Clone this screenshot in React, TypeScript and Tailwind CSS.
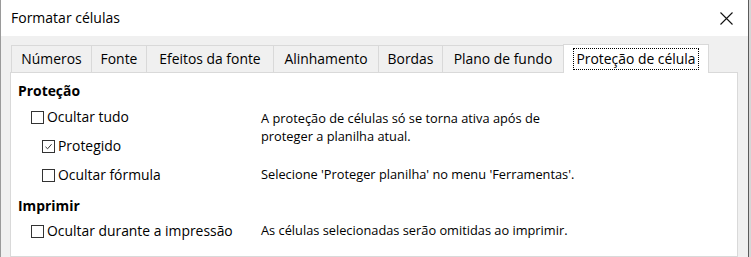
import React from "react";

const TABS: { label: string; w: string }[] = [
  { label: "Números", w: "w-[81px]" },
  { label: "Fonte", w: "w-[56px]" },
  { label: "Efeitos da fonte", w: "w-[128px]" },
  { label: "Alinhamento", w: "w-[106px]" },
  { label: "Bordas", w: "w-[65px]" },
  { label: "Plano de fundo", w: "w-[122px]" },
];

function Box({ checked = false }: { checked?: boolean }) {
  return (
    <span className="flex h-[13px] w-[13px] shrink-0 items-center justify-center border border-[#333]">
      {checked && (
        <svg width="9" height="9" viewBox="0 0 9 9" fill="none">
          <path d="M1.5 4.8 L3.6 6.8 L7.6 2.2" stroke="#333" strokeWidth="1" />
        </svg>
      )}
    </span>
  );
}

function Check({ label, checked, indent }: { label: string; checked?: boolean; indent?: boolean }) {
  return (
    <div className={`flex h-full items-center gap-[3px] ${indent ? "pl-[31px]" : "pl-[20px]"}`}>
      <Box checked={checked} />
      <span>{label}</span>
    </div>
  );
}

export default function App() {
  return (
    <div className="flex h-[257px] w-[751px] overflow-hidden bg-[#d6d6d6] font-['Open_Sans',sans-serif] text-[13.9px] text-black">
      <div className="w-px bg-[#9a9a9a]" />
      <div className="flex w-[747px] flex-col">
        {/* title bar */}
        <div className="flex h-[36px] shrink-0 items-center justify-between bg-white pl-[10px] pr-[15px]">
          <span className="text-[14px] leading-none">Formatar células</span>
          <svg width="13" height="13" viewBox="0 0 13 13" fill="none">
            <path d="M0.5 0.5 L12.5 12.5 M12.5 0.5 L0.5 12.5" stroke="#111" strokeWidth="1.1" />
          </svg>
        </div>

        {/* body */}
        <div className="flex flex-1 flex-col bg-[#f0f0f0] pl-[9px] pr-[10px] pt-[8px]">
          <div className="relative z-10 flex h-[28px] items-end pl-px">
            {TABS.map((t) => (
              <div
                key={t.label}
                className={`flex h-[27px] ${t.w} -mr-px items-center justify-center border border-b-0 border-[#d9d9d9] bg-[#f0f0f0]`}
              >
                {t.label}
              </div>
            ))}
            <div className="-mb-px flex h-[29px] w-[146px] items-center justify-center border border-b-0 border-[#d9d9d9] bg-white pb-px">
              <span className="border border-dotted border-black px-[2px] leading-[20px]">Proteção de célula</span>
            </div>
          </div>

          <div className="flex-1 border border-[#d9d9d9] bg-white">
            <div className="box-content flex h-[24px] items-center pl-[7px] pt-[6px] font-bold">Proteção</div>
            <div className="grid grid-cols-[250px_1fr] grid-rows-[29px_29px_28px]">
              <Check label="Ocultar tudo" />
              <p className="row-span-2 pt-[6px] text-[12.8px] leading-[18px]">
                A proteção de células só se torna ativa após de
                <br />
                proteger a planilha atual.
              </p>
              <Check label="Protegido" checked indent />
              <Check label="Ocultar fórmula" indent />
              <p className="flex items-center text-[12.8px]">
                Selecione 'Proteger planilha' no menu 'Ferramentas'.
              </p>
            </div>
            <div className="mt-[5px] flex h-[24px] items-center pl-[7px] font-bold">Imprimir</div>
            <div className="grid h-[26px] grid-cols-[250px_1fr]">
              <Check label="Ocultar durante a impressão" />
              <p className="flex items-center text-[12.8px]">
                As células selecionadas serão omitidas ao imprimir.
              </p>
            </div>
          </div>
        </div>
      </div>
      <div className="w-px bg-[#5a5a5a]" />
      <div className="flex-1 bg-[#d6d6d6]" />
    </div>
  );
}
